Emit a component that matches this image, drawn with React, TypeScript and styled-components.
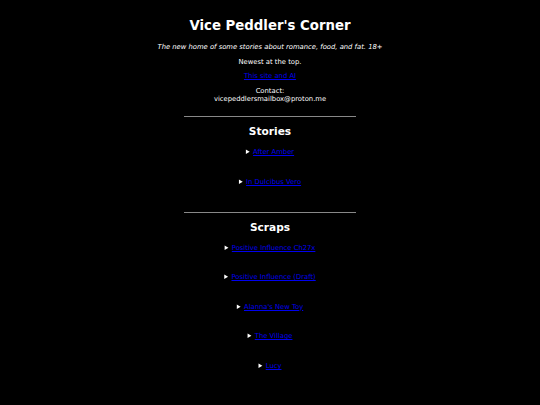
import React from "react";
import styled, { createGlobalStyle } from "styled-components";

const GlobalStyle = createGlobalStyle`
  html, body {
    margin: 0;
    padding: 0;
    background: #000;
  }
  body {
    color: #fff;
    font-family: "DejaVu Sans", Verdana, sans-serif;
  }
`;

const SPage = styled.div`
  min-height: 405px;
  display: flex;
  flex-direction: column;
  align-items: center;
  padding-top: 18px;
  text-align: center;
  font-size: 6.8px;
`;

const STitle = styled.h1`
  margin: 0 0 9px;
  font-size: 13.3px;
  line-height: 16px;
  font-weight: bold;
`;

const STagline = styled.p`
  margin: 0 0 7px;
  line-height: 8px;
  font-style: italic;
`;

const SPara = styled.p<{ gap?: number }>`
  margin: 0 0 ${({ gap }) => gap ?? 6}px;
  line-height: 8px;
`;

const SLink = styled.a`
  color: #0000ee;
`;

const SRule = styled.hr`
  width: 172px;
  margin: 7px 0 8px;
  border: 0;
  border-top: 1px solid #888;
`;

const SHeading = styled.h2`
  margin: 0 0 10px;
  font-size: 10.6px;
  line-height: 13px;
  font-weight: bold;
`;

const SList = styled.div`
  display: flex;
  flex-direction: column;
  gap: 20.6px;
  margin-bottom: 18px;
`;

const SEntry = styled.details`
  summary {
    cursor: pointer;
    line-height: 9px;
  }
`;

const stories = ["After Amber", "In Dulcibus Vero"];
const scraps = [
  "Positive Influence Ch27x",
  "Positive Influence (Draft)",
  "Alanna's New Toy",
  "The Village",
  "Lucy",
];

const Section = ({ title, items }: { title: string; items: string[] }) => (
  <>
    <SRule />
    <SHeading>{title}</SHeading>
    <SList>
      {items.map((item) => (
        <SEntry key={item}>
          <summary>
            <SLink href="#">{item}</SLink>
          </summary>
        </SEntry>
      ))}
    </SList>
  </>
);

export default function App() {
  return (
    <>
      <GlobalStyle />
      <SPage>
        <STitle>Vice Peddler's Corner</STitle>
        <STagline>
          The new home of some stories about romance, food, and fat. 18+
        </STagline>
        <SPara>Newest at the top.</SPara>
        <SPara gap={7}>
          <SLink href="#">This site and AI</SLink>
        </SPara>
        <SPara>
          Contact:
          <br />
          vicepeddlersmailbox@proton.me
        </SPara>
        <Section title="Stories" items={stories} />
        <Section title="Scraps" items={scraps} />
      </SPage>
    </>
  );
}
